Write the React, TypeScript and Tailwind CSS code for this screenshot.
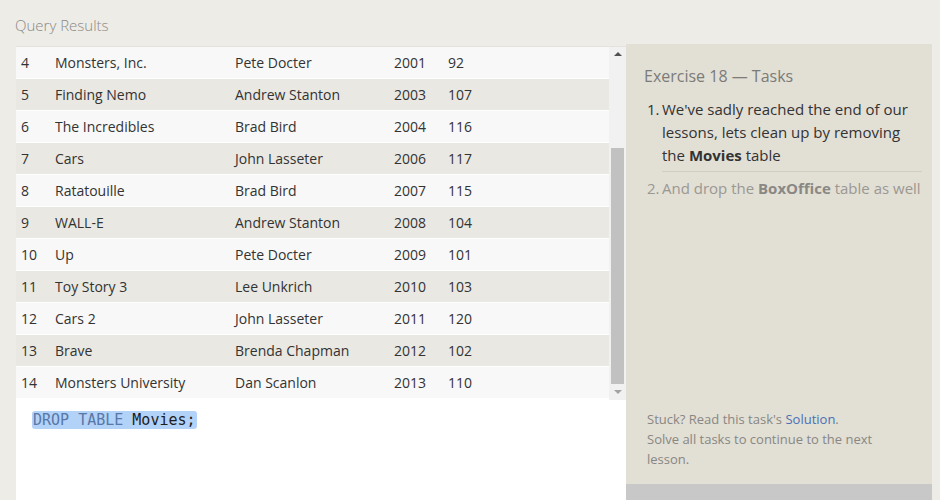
const rows: [number, string, string, number, number][] = [
  [4, "Monsters, Inc.", "Pete Docter", 2001, 92],
  [5, "Finding Nemo", "Andrew Stanton", 2003, 107],
  [6, "The Incredibles", "Brad Bird", 2004, 116],
  [7, "Cars", "John Lasseter", 2006, 117],
  [8, "Ratatouille", "Brad Bird", 2007, 115],
  [9, "WALL-E", "Andrew Stanton", 2008, 104],
  [10, "Up", "Pete Docter", 2009, 101],
  [11, "Toy Story 3", "Lee Unkrich", 2010, 103],
  [12, "Cars 2", "John Lasseter", 2011, 120],
  [13, "Brave", "Brenda Chapman", 2012, 102],
  [14, "Monsters University", "Dan Scanlon", 2013, 110],
];

export default function App() {
  return (
    <div
      className="flex h-[500px] w-[940px] overflow-hidden bg-[#eeece6] text-[#333]"
      style={{ fontFamily: '"Open Sans", "Noto Sans", sans-serif' }}
    >
      <div className="flex w-[626px] flex-col pl-4">
        <div className="-ml-[1px] pt-[14px] pb-[10px] text-[15px] font-light leading-[22px] text-[#8a8a86]">
          Query Results
        </div>
        <div className="flex h-[354px] border-t border-[#e4e2dc] bg-white">
          <div className="flex-1">
            {rows.map(([id, title, director, year, mins], i) => (
              <div
                key={id}
                className={`flex h-[32px] items-center border-b border-white text-[14px] ${
                  i % 2 === 0 ? "bg-[#f8f8f8]" : "bg-[#e9e8e2]"
                }`}
              >
                <span className="w-[39px] pl-[5px]">{id}</span>
                <span className="w-[180px]">{title}</span>
                <span className="w-[159px]">{director}</span>
                <span className="w-[54px]">{year}</span>
                <span>{mins}</span>
              </div>
            ))}
          </div>
          <div className="relative w-[17px] bg-[#f1f1f1]">
            <div className="absolute left-[5px] top-[5px] h-0 w-0 border-x-[4px] border-b-[4px] border-x-transparent border-b-[#505050]" />
            <div className="absolute left-[2px] top-[101px] h-[236px] w-[13px] bg-[#c1c1c1]" />
            <div className="absolute bottom-[6px] left-[5px] h-0 w-0 border-x-[4px] border-t-[4px] border-x-transparent border-t-[#a3a3a3]" />
          </div>
        </div>
        <div className="flex-1 bg-white pl-4 pt-[7px]">
          <span
            className="rounded-[3px] bg-[#b3d2f7] px-px text-[15px] leading-[20px]"
            style={{ fontFamily: '"DejaVu Sans Mono", "Liberation Mono", monospace' }}
          >
            <span className="text-[#5878a8]">DROP TABLE </span>
            <span className="text-[#1d1d1d]">Movies;</span>
          </span>
        </div>
      </div>
      <div className="mt-[44px] flex w-[306px] flex-col">
        <div className="flex flex-1 flex-col bg-[#e2dfd5] pl-[18px] pr-[10px]">
          <div className="pt-[21px] text-[16px] leading-[22px] text-[#7b7b78]">
            Exercise 18 — Tasks
          </div>
          <ol className="mt-[11px] text-[15px] leading-[23px]">
            <li className="flex pb-[5px]">
              <span className="w-[18px] pl-[3px]">1.</span>
              <span className="flex-1 border-b border-[#d0cdc4] pb-[4px] pr-2">
                We've sadly reached the end of our lessons, lets clean up by removing the{" "}
                <span className="font-bold">Movies</span> table
              </span>
            </li>
            <li className="flex text-[#9a9893]">
              <span className="w-[18px] pl-[3px]">2.</span>
              <span className="flex-1 whitespace-nowrap">
                And drop the <span className="font-bold text-[#8a8884]">BoxOffice</span> table as well
              </span>
            </li>
          </ol>
          <div className="mt-auto pb-[15px] pl-[3px] text-[13px] leading-[20px] text-[#888783]">
            Stuck? Read this task's <span className="text-[#4a6fb5]">Solution</span>.
            <br />
            Solve all tasks to continue to the next
            <br />
            lesson.
          </div>
        </div>
        <div className="h-[16px] bg-[#c8c8c8]" />
      </div>
    </div>
  );
}
